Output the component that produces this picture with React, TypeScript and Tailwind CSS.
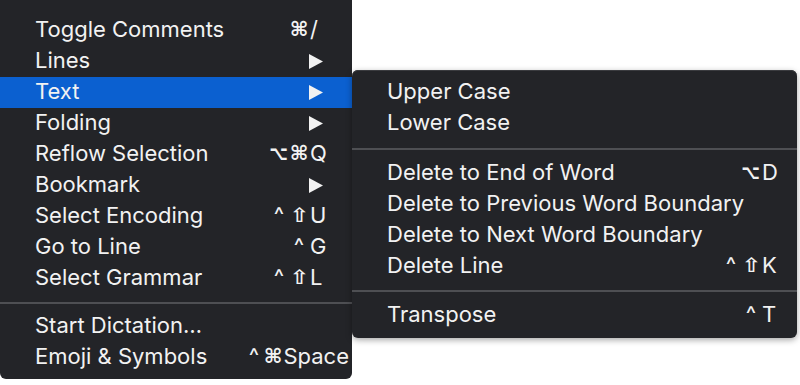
import React from 'react';

type Item = {
  label: string;
  mods?: string[];
  keyName?: string;
  submenu?: boolean;
  active?: boolean;
  wide?: boolean;
};

type Entry = Item | 'sep';

const mainItems: Entry[] = [
  { label: 'Toggle Comments', mods: ['⌘'], keyName: '/' },
  { label: 'Lines', submenu: true },
  { label: 'Text', submenu: true, active: true },
  { label: 'Folding', submenu: true },
  { label: 'Reflow Selection', mods: ['⌥', '⌘'], keyName: 'Q' },
  { label: 'Bookmark', submenu: true },
  { label: 'Select Encoding', mods: ['^', '⇧'], keyName: 'U' },
  { label: 'Go to Line', mods: ['^'], keyName: 'G' },
  { label: 'Select Grammar', mods: ['^', '⇧'], keyName: 'L' },
  'sep',
  { label: 'Start Dictation…' },
  { label: 'Emoji & Symbols', mods: ['^', '⌘'], keyName: 'Space', wide: true },
];

const textItems: Entry[] = [
  { label: 'Upper Case' },
  { label: 'Lower Case' },
  'sep',
  { label: 'Delete to End of Word', mods: ['⌥'], keyName: 'D' },
  { label: 'Delete to Previous Word Boundary' },
  { label: 'Delete to Next Word Boundary' },
  { label: 'Delete Line', mods: ['^', '⇧'], keyName: 'K' },
  'sep',
  { label: 'Transpose', mods: ['^'], keyName: 'T' },
];

// per-glyph tweaks so the fallback font looks closer to the mac modifier keys
const modClass: Record<string, string> = {
  '^': "font-['Inter',sans-serif] text-[22px]",
  '⌘': "font-['DejaVu_Sans',sans-serif] text-[20px] font-semibold",
  '⌥': "font-['DejaVu_Sans',sans-serif] text-[20px] font-semibold scale-x-[0.8]",
  '⇧': "font-['DejaVu_Sans',sans-serif] text-[20px] font-semibold scale-x-[1.15]",
};

const Arrow = () => (
  <svg width="14" height="15" viewBox="0 0 14 15" className="block">
    <path d="M0 0 L14 7.5 L0 15 Z" fill="#f2f2f2" />
  </svg>
);

const Shortcut = ({ item }: { item: Item }) => {
  if (item.submenu) {
    return (
      <div className="w-[20px] flex items-center pt-[3px]">
        <Arrow />
      </div>
    );
  }
  if (!item.keyName) return null;
  return (
    <div className={`flex items-center ${item.wide ? 'mr-[-20px]' : ''}`}>
      {item.mods?.map((m, i) => (
        <span key={i} className={`flex justify-center ${item.wide ? 'w-[19px]' : 'w-[20px]'}`}>
          <span className={`inline-block ${modClass[m]}`}>{m}</span>
        </span>
      ))}
      <span className={item.wide ? 'pl-[1px]' : 'w-[20px] pl-[1px]'}>{item.keyName}</span>
    </div>
  );
};

const Menu = ({
  entries,
  className,
  padLeft,
  padRight,
  sepHeights,
}: {
  entries: Entry[];
  className: string;
  padLeft: string;
  padRight: string;
  sepHeights: string[];
}) => {
  let sepIndex = 0;
  return (
    <div className={className}>
      {entries.map((e, i) => {
        if (e === 'sep') {
          const h = sepHeights[sepIndex++] || 'h-[18px]';
          return (
            <div key={i} className={`${h} flex items-center`}>
              <div className="w-full h-[2px] bg-[#4e4f53]" />
            </div>
          );
        }
        return (
          <div
            key={i}
            className={`h-[31px] pb-[3px] flex items-center ${padLeft} ${padRight} ${e.active ? 'bg-[#0b60d0]' : ''}`}
          >
            <span className="flex-1 whitespace-nowrap">{e.label}</span>
            <Shortcut item={e} />
          </div>
        );
      })}
    </div>
  );
};

export default function App() {
  return (
    <div className="w-[800px] h-[385px] bg-white flex items-start overflow-hidden font-['Inter','DejaVu_Sans',sans-serif] text-[22px] text-[#f2f2f2] leading-none">
      <Menu
        entries={mainItems}
        className="w-[352px] h-[379px] shrink-0 bg-[#232428] rounded-b-[6px] pt-[15px] pb-[6px]"
        padLeft="pl-[35px]"
        padRight="pr-[23px]"
        sepHeights={['h-[17px]']}
      />
      <Menu
        entries={textItems}
        className="mt-[70px] w-[445px] h-[268px] shrink-0 bg-[#232428] rounded-[6px] pt-[7px] pb-[7px] shadow-[inset_0_1px_0_#3a3b3f,0_2px_6px_rgba(0,0,0,0.35)]"
        padLeft="pl-[35px]"
        padRight="pr-[16px]"
        sepHeights={['h-[19px]', 'h-[18px]']}
      />
    </div>
  );
}
